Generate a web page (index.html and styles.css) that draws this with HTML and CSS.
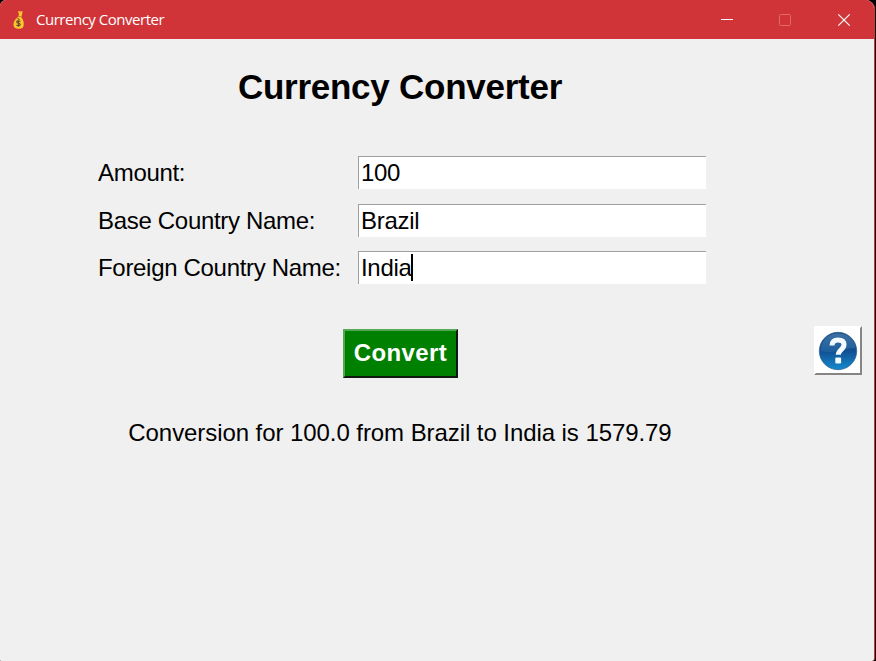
FILE: index.html
```html
<!DOCTYPE html>
<html lang="en">
<head>
<meta charset="utf-8">
<title>Currency Converter</title>
<link rel="stylesheet" href="styles.css">
</head>
<body>
<div class="window">
  <header class="titlebar">
    <svg class="app-icon" width="12" height="20" viewBox="0 0 12 20">
      <path d="M5 1l2 .6L9.500 1 9 5 8 7c2 2 3 4.500 2.700 8C10.500 18 9 18.700 6 18.700S.5 18 .5 14.500C.5 11.500 2.500 8.500 5 7L6 4.500z" fill="#fbc52c"/>
      <path d="M5 6.500h4" stroke="#c58a25" stroke-width="1.200"/>
      <path d="M4.500 8.500l2 1M7.300 11.500c-1.500-1.300-4-.6-3.500.8.4 1 3.300.7 3.400 2.200 0 1.500-2.500 1.600-3.700.5M5.500 10.300v6.500" fill="none" stroke="#6d4932" stroke-width="1.200"/>
    </svg>
    <span class="caption">Currency Converter</span>
    <svg class="controls" width="140" height="20" viewBox="0 0 140 20">
      <path d="M6 9.500h12" stroke="#fff"/>
      <rect x="64.500" y="4.500" width="11" height="11" rx="1" fill="none" stroke="#df6a6d"/>
      <path d="M123.300 4.300l11.400 11.400M134.700 4.300l-11.400 11.400" stroke="#fff" stroke-width="1.200"/>
    </svg>
  </header>
  <main class="content">
    <section class="converter">
      <h1>Currency Converter</h1>
      <div class="form">
        <span class="label">Amount:</span><div class="entry">100</div>
        <span class="label">Base Country Name:</span><div class="entry">Brazil</div>
        <span class="label">Foreign Country Name:</span><div class="entry">India<i class="caret"></i></div>
      </div>
      <button class="convert">Convert</button>
      <p class="result">Conversion for 100.0 from Brazil to India is 1579.79</p>
    </section>
    <button class="help" aria-label="Help">
      <svg width="40" height="40" viewBox="0 0 40 40">
        <defs>
          <linearGradient id="ball" x2="0" y2="1"><stop offset="0" stop-color="#1c4f85"/><stop offset=".5" stop-color="#104f92"/><stop offset="1" stop-color="#158bd0"/></linearGradient>
          <linearGradient id="shine" x2="0" y2="1"><stop offset="0" stop-color="#5486b5"/><stop offset="1" stop-color="#2467a5"/></linearGradient>
        </defs>
        <circle cx="20" cy="20" r="18.700" fill="url(#ball)" stroke="#2b5a87" stroke-width=".7"/>
        <path d="M2.500 20C3 9 10 2.500 20 2.500S37 9 37.500 17C27 16 15 24 2.500 20z" fill="url(#shine)" opacity=".6"/>
        <path d="M14 14.500c.2-4 2.400-5.600 6-5.600 3.900 0 6 1.700 6 4.900 0 5-5.700 4.600-5.700 10" fill="none" stroke="#f4fbfd" stroke-width="5"/>
        <rect x="17.300" y="26.500" width="5.800" height="6" rx="1" fill="#f4fbfd"/>
      </svg>
    </button>
  </main>
</div>
</body>
</html>
```
FILE: styles.css
```css
* { box-sizing: border-box; }
body {
  margin: 0;
  width: 876px;
  height: 661px;
  overflow: hidden;
  background: #000;
  font-family: "Liberation Sans", Arial, sans-serif;
}
.window {
  width: 875px;
  height: 661px;
  overflow: hidden;
  border-right: 1px solid #d13438;
  border-radius: 6px 9px 3px 1px;
  background: #f0f0f0;
}
.titlebar {
  display: flex;
  align-items: center;
  height: 39px;
  padding-left: 13px;
  background: #d13438;
  color: #fff;
}
.caption {
  margin: -2px 0 0 11px;
  font: 15px/20px "Open Sans", sans-serif;
  letter-spacing: -0.48px;
}
.controls { margin-left: auto; margin-right: 19px; }
.content { display: flex; }
.converter {
  display: flex;
  flex-direction: column;
  align-items: center;
  width: 800px;
}
h1 {
  margin: 28px 0 0;
  font-size: 35px;
  line-height: 40px;
  letter-spacing: -0.25px;
}
.form {
  display: grid;
  grid-template-columns: 260px 348px;
  grid-auto-rows: 33px;
  row-gap: 14.500px;
  margin: 49px 0 0 4px;
  font-size: 24px;
}
.label { line-height: 33px; letter-spacing: -0.31px; }
.entry {
  display: flex;
  padding-left: 2px;
  border-top: 1px solid #a0a0a0;
  border-left: 1px solid #a0a0a0;
  background: #fff;
  line-height: 32px;
  letter-spacing: -0.3px;
}
.caret { width: 2px; height: 27px; margin: 2px 0 0 -1px; background: #000; }
.convert {
  width: 115px;
  height: 49px;
  margin: 45px 0 0 1px;
  padding: 0;
  border: 2px solid;
  border-color: #55a955 #101810 #101810 #55a955;
  background: #008000;
  color: #fff;
  font: bold 24px/44px "Liberation Sans", sans-serif;
  letter-spacing: 0.4px;
  padding-bottom: 2px;
}
.result {
  margin: 41px 0 0;
  font-size: 24px;
  line-height: 28px;
  letter-spacing: -0.07px;
  white-space: nowrap;
}
.help {
  display: flex;
  align-items: center;
  justify-content: center;
  width: 48px;
  height: 49px;
  margin: 287px 0 0 14px;
  padding: 0;
  border: 2px solid;
  border-color: #fff #858585 #858585 #fff;
  background: #fff;
}
```
